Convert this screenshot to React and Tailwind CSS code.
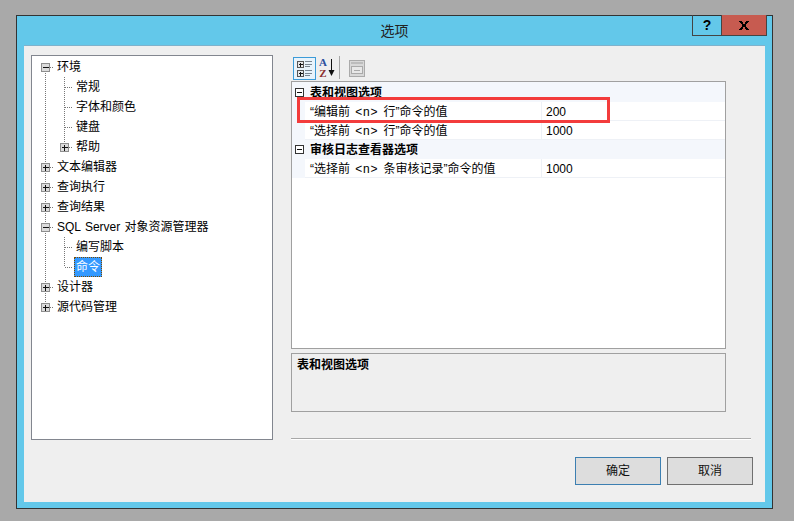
const FONT = "font-['Liberation_Sans','Noto_Sans_CJK_SC',sans-serif]";

const treeItems = [
  { label: "环境", level: 0, expander: "minus", up: false, down: true },
  { label: "常规", level: 1, trunk: true, up: true, down: true },
  { label: "字体和颜色", level: 1, trunk: true, up: true, down: true },
  { label: "键盘", level: 1, trunk: true, up: true, down: true },
  { label: "帮助", level: 1, trunk: true, expander: "plus", up: true, down: false },
  { label: "文本编辑器", level: 0, expander: "plus", up: true, down: true },
  { label: "查询执行", level: 0, expander: "plus", up: true, down: true },
  { label: "查询结果", level: 0, expander: "plus", up: true, down: true },
  { label: "SQL Server 对象资源管理器", level: 0, expander: "minus", up: true, down: true },
  { label: "编写脚本", level: 1, trunk: true, up: true, down: true },
  { label: "命令", level: 1, trunk: true, up: true, down: false, selected: true },
  { label: "设计器", level: 0, expander: "plus", up: true, down: true },
  { label: "源代码管理", level: 0, expander: "plus", up: true, down: false },
];

// dotted connectors and the +/- box of one tree row
const TreeLines = ({ item }) => {
  const x = item.level === 0 ? 13.5 : 32.5;
  const width = item.level === 0 ? 25 : 44;
  return (
    <svg width={width} height="20" className="shrink-0" shapeRendering="crispEdges">
      <g stroke="#777" strokeDasharray="1 1" fill="none">
        {item.trunk && <path d="M13.5 0V20" />}
        {item.up && <path d={`M${x} 0V10`} />}
        {item.down && <path d={`M${x} 10V20`} />}
        <path d={`M${x} 10.5H${x + 7}`} />
      </g>
      {item.expander && (
        <g>
          <rect x={x - 4} y="6.5" width="8" height="8" fill="#dcdcdc" stroke="#8e8e8e" />
          <path d={`M${x - 2.5} 10.5H${x + 3}`} stroke="#111" />
          {item.expander === "plus" && <path d={`M${x} 8V13.5`} stroke="#111" />}
        </g>
      )}
    </svg>
  );
};

const TreeRow = ({ item }) => (
  <div className="flex h-5 items-center [word-spacing:1px]">
    <TreeLines item={item} />
    {item.selected ? (
      <span className="-ml-[2px] flex h-5 items-center border border-dotted border-[#7a4a00] bg-[#3399ff] px-[1px] text-white">
        {item.label}
      </span>
    ) : (
      <span className="whitespace-nowrap">{item.label}</span>
    )}
  </div>
);

const CategoryRow = ({ label, h, pad }) => (
  <div className={`flex ${h} items-center bg-[#f4f7fc]`}>
    <svg width="14" height="11" className="ml-[1px] shrink-0" shapeRendering="crispEdges">
      <rect x="2.5" y="1.5" width="8" height="8" fill="#fff" stroke="#333" />
      <path d="M4 5.5H9" stroke="#111" />
    </svg>
    <span className={`ml-[1px] pl-[2px] font-bold ${pad}`}>{label}</span>
  </div>
);

const PropRow = ({ before, after, value, h }) => (
  <div className={`flex ${h} bg-[#f4f7fc]`}>
    <div className="w-[13px] shrink-0" />
    <div className="flex w-[236px] shrink-0 items-center border-b border-[#eef1f6] bg-white pl-[5px] pt-[1px]">
      <span className="whitespace-pre [word-spacing:2px]">
        {before} <span className="tracking-[0.7px]">{"<n>"}</span> {after}
      </span>
    </div>
    <div className="flex flex-1 items-center border-b border-l border-[#eef1f6] bg-white pl-[4px] pt-[1px]">{value}</div>
  </div>
);

const ToolbarIcons = () => (
  <div className="flex h-[26px] items-start pl-[2px] pt-[1px]">
    <div className="mt-[1px] flex h-[23px] w-[23px] items-center justify-center border border-[#3c9bd8] bg-[#e8f3fb]">
      <svg width="19" height="19" shapeRendering="crispEdges">
        <rect x="2.5" y="2.5" width="6" height="6" fill="#e8e8e8" stroke="#555" />
        <path d="M3.5 5.5H8M5.5 3.5V8" stroke="#111" />
        <rect x="2.5" y="11.5" width="6" height="6" fill="#e8e8e8" stroke="#555" />
        <path d="M3.5 14.5H8M5.5 12.5V17" stroke="#111" />
        <path d="M10 2.5H17M10 5.5H17M10 7.5H15M10 11.5H17M10 14.5H17M10 16.5H15" stroke="#7a8590" />
      </svg>
    </div>
    <div className="ml-[2px] mt-[1px] flex w-[10px] flex-col items-center font-['Liberation_Serif',serif] text-[11px] font-bold leading-[11px]">
      <span className="text-[#2a4f9e]">A</span>
      <span className="text-[#8c2f2f]">Z</span>
    </div>
    <svg width="8" height="22" className="ml-[-1px]">
      <path d="M4.5 3V17" stroke="#111" />
      <path d="M1.5 14L4.5 20L7.5 14Z" fill="#111" />
    </svg>
    <div className="ml-[4px] h-[23px] w-[1px] bg-[#a8a8a8]" />
    <div className="ml-[9px] mt-[4px] flex h-[17px] w-[16px] flex-col border border-[#aaaaaa] bg-[#d8d8d8] p-[1px]">
      <div className="h-[2px] bg-[#bcbcbc]" />
      <div className="mt-[2px] flex h-[8px] items-center border border-[#aaaaaa] bg-[#e8e8e8] px-[2px]">
        <div className="h-[1px] w-[6px] bg-[#aaaaaa]" />
      </div>
    </div>
  </div>
);

const App = () => {
  return (
    <div className={`h-[521px] w-[794px] overflow-hidden bg-[#a9a9a9] pl-[16px] pt-[15px] text-[12px] leading-none text-black ${FONT}`}>
      <div className="flex h-[494px] w-[757px] flex-col border border-[#333] bg-[#63c8ea] px-[7px] pb-[6px]">
        {/* Title bar */}
        <div className="relative flex h-[29px] shrink-0 items-center justify-center">
          <span className="text-[14px] text-[#222]">选项</span>
          <div className="absolute -top-[1px] right-[-2px] flex h-[21px]">
            <div className="flex w-[29px] items-center justify-center border-b border-l border-[#444] text-[14px] font-bold text-black">?</div>
            <div className="flex w-[46px] items-center justify-center border-b border-l border-r border-[#444] bg-[#c75b50]">
              <svg width="10" height="9" shapeRendering="crispEdges">
                <path d="M0 0H3V1H4V3H6V1H7V0H10V1H9V2H8V3H7V6H8V7H9V8H10V9H7V8H6V6H4V8H3V9H0V8H1V7H2V6H3V3H2V2H1V1H0Z" fill="#000" />
              </svg>
            </div>
          </div>
        </div>

        {/* Dialog body */}
        <div className="flex flex-1 gap-[18px] border-t border-[#7fb2cc] bg-[#efefef] pl-[7px] pt-[9px]">
          <div className="h-[385px] w-[242px] border border-[#82868f] bg-white pt-[1px]">
            {treeItems.map((item) => (
              <TreeRow key={item.label} item={item} />
            ))}
          </div>

          <div className="flex w-[462px] flex-col">
            <ToolbarIcons />
            <div className="relative h-[268px] w-[435px] border border-[#a0a0a0] bg-white">
              <CategoryRow label="表和视图选项" h="h-[20px]" pad="pt-[1px]" />
              <PropRow before="“编辑前" after="行”命令的值" value="200" h="h-[19px]" />
              <PropRow before="“选择前" after="行”命令的值" value="1000" h="h-[19px]" />
              <CategoryRow label="审核日志查看器选项" h="h-[19px]" />
              <PropRow before="“选择前" after="条审核记录”命令的值" value="1000" h="h-[19px]" />
              {/* red annotation box */}
              <div className="absolute left-[5px] top-[15px] h-[26px] w-[313px] border-[3px] border-[#f33c3c]" />
            </div>
            <div className="mt-[4px] h-[59px] w-[435px] border border-[#a0a0a0] pl-[5px] pt-[5px] font-bold">表和视图选项</div>
            <div className="mt-[26px] h-[2px] w-[460px] border-b border-white bg-[#a8a8a8]" />
            <div className="mt-[17px] flex gap-[6px] pl-[284px]">
              <button className="h-[28px] w-[86px] border border-[#3c7fb1] bg-[#dddddd] text-[#111]">确定</button>
              <button className="h-[28px] w-[86px] border border-[#707070] bg-[#dddddd] text-[#111]">取消</button>
            </div>
          </div>
        </div>
      </div>
    </div>
  );
};

export default App;
